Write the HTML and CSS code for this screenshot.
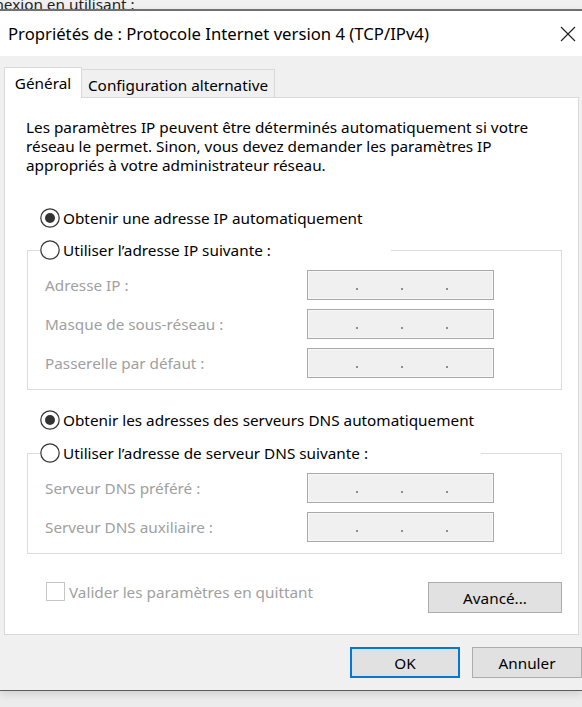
FILE: index.html
```html
<!DOCTYPE html>
<html lang="fr">
<head>
<meta charset="utf-8">
<title>Propriétés de : Protocole Internet version 4 (TCP/IPv4)</title>
<link rel="stylesheet" href="styles.css">
</head>
<body>
<div class="behind"><span>Connexion en utilisant :</span></div>
<div class="window">
  <div class="titlebar">
    <span class="title">Propriétés de : Protocole Internet version 4 (TCP/IPv4)</span>
    <svg class="close" viewBox="0 0 16 16" aria-hidden="true"><path d="M1 1 L15 15 M15 1 L1 15" stroke="#1b1b1b" stroke-width="1.1" fill="none"/></svg>
  </div>
  <div class="content">
    <div class="tabs">
      <div class="tab tab-sel">Général</div>
      <div class="tab tab-alt">Configuration alternative</div>
    </div>
    <div class="panel">
      <div class="desc">Les paramètres IP peuvent être déterminés automatiquement si votre<br>réseau le permet. Sinon, vous devez demander les paramètres IP<br>appropriés à votre administrateur réseau.</div>

      <div class="radio radio-ip-auto">
        <svg class="rb" viewBox="0 0 20 20"><circle cx="10" cy="10" r="9.2" fill="#fff" stroke="#333" stroke-width="1.2"/><circle cx="10" cy="10" r="5" fill="#333"/></svg>
        <span>Obtenir une adresse IP automatiquement</span>
      </div>

      <div class="group group-ip">
        <div class="ghead">
          <span class="seg-l"></span>
          <div class="radio cap cap-ip">
            <svg class="rb" viewBox="0 0 20 20"><circle cx="10" cy="10" r="9.2" fill="#fff" stroke="#333" stroke-width="1.2"/></svg>
            <span>Utiliser l’adresse IP suivante :</span>
          </div>
          <span class="seg-r"></span>
        </div>
        <div class="gbody">
          <div class="frow"><span class="lbl">Adresse IP :</span><div class="ip"><span class="oct"></span><span class="dot"></span><span class="oct"></span><span class="dot"></span><span class="oct"></span><span class="dot"></span><span class="oct"></span></div></div>
          <div class="frow"><span class="lbl">Masque de sous-réseau :</span><div class="ip"><span class="oct"></span><span class="dot"></span><span class="oct"></span><span class="dot"></span><span class="oct"></span><span class="dot"></span><span class="oct"></span></div></div>
          <div class="frow"><span class="lbl">Passerelle par défaut :</span><div class="ip"><span class="oct"></span><span class="dot"></span><span class="oct"></span><span class="dot"></span><span class="oct"></span><span class="dot"></span><span class="oct"></span></div></div>
        </div>
      </div>

      <div class="radio radio-dns-auto">
        <svg class="rb" viewBox="0 0 20 20"><circle cx="10" cy="10" r="9.2" fill="#fff" stroke="#333" stroke-width="1.2"/><circle cx="10" cy="10" r="5" fill="#333"/></svg>
        <span>Obtenir les adresses des serveurs DNS automatiquement</span>
      </div>

      <div class="group group-dns">
        <div class="ghead">
          <span class="seg-l"></span>
          <div class="radio cap cap-dns">
            <svg class="rb" viewBox="0 0 20 20"><circle cx="10" cy="10" r="9.2" fill="#fff" stroke="#333" stroke-width="1.2"/></svg>
            <span>Utiliser l’adresse de serveur DNS suivante :</span>
          </div>
          <span class="seg-r"></span>
        </div>
        <div class="gbody">
          <div class="frow"><span class="lbl">Serveur DNS préféré :</span><div class="ip"><span class="oct"></span><span class="dot"></span><span class="oct"></span><span class="dot"></span><span class="oct"></span><span class="dot"></span><span class="oct"></span></div></div>
          <div class="frow"><span class="lbl">Serveur DNS auxiliaire :</span><div class="ip"><span class="oct"></span><span class="dot"></span><span class="oct"></span><span class="dot"></span><span class="oct"></span><span class="dot"></span><span class="oct"></span></div></div>
        </div>
      </div>

      <div class="bottom-row">
        <div class="check"><span class="cbox"></span><span class="clabel">Valider les paramètres en quittant</span></div>
        <div class="btn btn-adv">Avancé...</div>
      </div>
    </div>
    <div class="actions">
      <div class="btn btn-ok">OK</div>
      <div class="btn btn-cancel">Annuler</div>
    </div>
  </div>
</div>
</body>
</html>
```
FILE: styles.css
```css
html {
  background: #ececec;
}
body {
  margin: 0;
  width: 582px;
  height: 707px;
  overflow: hidden;
  font-family: "Noto Sans", "Open Sans", sans-serif;
  font-size: 15.3px;
  color: #000;
}

/* window underneath */
.behind {
  height: 9px;
  background: #f0f0f0;
  overflow: hidden;
  line-height: 20px;
}
.behind span {
  display: block;
  margin-top: -6px;
  margin-left: -34px;
  white-space: nowrap;
  color: #222;
}

/* dialog window */
.window {
  border-top: 2px solid #707070;
  border-bottom: 1px solid #5c5c5c;
  background: #f0f0f0;
  box-shadow: 0 3px 8px rgba(0, 0, 0, 0.12);
}
.titlebar {
  height: 45px;
  background: #fff;
  display: flex;
  align-items: center;
  padding-left: 8px;
}
.title {
  font-size: 16.7px;
  white-space: nowrap;
}
.close {
  margin-left: auto;
  margin-right: 6px;
  width: 16px;
  height: 16px;
}

.content {
  padding: 11px 0 12px 0;
}

/* tabs */
.tabs {
  display: flex;
  align-items: flex-end;
  height: 30px;
  margin-left: 4px;
}
.tab {
  box-sizing: border-box;
  border: 1px solid #d9d9d9;
  border-bottom: none;
  display: flex;
  align-items: center;
  justify-content: center;
  white-space: nowrap;
}
.tab-sel {
  width: 78px;
  height: 31px;
  margin-bottom: -1px;
  background: #fff;
  position: relative;
  z-index: 1;
}
.tab-alt {
  width: 194px;
  height: 28px;
  margin-left: -1px;
  padding-top: 2px;
  background: #f0f0f0;
}

/* panel */
.panel {
  margin: 0 3px 0 4px;
  border: 1px solid #d9d9d9;
  background: #fff;
  padding: 20px 0 21px 0;
}
.desc {
  margin-left: 21px;
  line-height: 19px;
  white-space: nowrap;
}

.radio {
  display: flex;
  align-items: center;
  height: 20px;
  white-space: nowrap;
}
.rb {
  width: 20px;
  height: 20px;
  flex: none;
  margin-right: 3px;
}
.radio-ip-auto {
  margin: 33px 0 0 35px;
}
.radio-dns-auto {
  margin: 20px 0 0 35px;
}

/* group boxes */
.group {
  width: 535px;
  margin-left: 22px;
}
.group-ip {
  margin-top: 12px;
}
.group-dns {
  margin-top: 13px;
}
.ghead {
  display: flex;
  height: 20px;
  align-items: flex-end;
}
.seg-l {
  box-sizing: border-box;
  width: 13px;
  height: 10px;
  border-top: 1px solid #dcdcdc;
  border-left: 1px solid #dcdcdc;
}
.seg-r {
  box-sizing: border-box;
  flex: 1;
  height: 10px;
  border-top: 1px solid #dcdcdc;
  border-right: 1px solid #dcdcdc;
}
.cap {
  align-self: center;
  background: #fff;
}
.cap-ip {
  width: 351px;
}
.cap-dns {
  width: 441px;
}
.gbody {
  border: 1px solid #dcdcdc;
  border-top: none;
  padding: 10px 0 11px 17px;
  display: grid;
  grid-template-columns: 262px 187px;
  row-gap: 9px;
  align-items: center;
}
.frow {
  display: contents;
}
.lbl {
  color: #a0a0a0;
  white-space: nowrap;
}
.ip {
  box-sizing: border-box;
  height: 30px;
  border: 1px solid #a9a9a9;
  box-shadow: inset 0 0 0 1px #f7f7f7;
  background: #f0f0f0;
  display: flex;
  padding-left: 5px;
}
.oct {
  width: 43px;
  flex: none;
}
.dot {
  width: 2px;
  height: 2px;
  flex: none;
  align-self: flex-end;
  margin-bottom: 9px;
  background: #8c8c9c;
}

/* bottom of panel */
.bottom-row {
  margin: 28px 16px 0 41px;
  display: flex;
  justify-content: space-between;
  align-items: flex-start;
}
.check {
  display: flex;
  align-items: center;
  height: 19px;
  color: #a0a0a0;
  white-space: nowrap;
}
.cbox {
  box-sizing: border-box;
  width: 19px;
  height: 19px;
  border: 1px solid #c6c6c6;
  background: #fff;
  margin-right: 4px;
}

.btn {
  box-sizing: border-box;
  height: 31px;
  border: 1px solid #adadad;
  background: #e1e1e1;
  display: flex;
  align-items: center;
  justify-content: center;
  white-space: nowrap;
}
.btn-adv {
  width: 134px;
}
.actions {
  margin-top: 12px;
  display: flex;
  justify-content: flex-end;
  gap: 12px;
}
.btn-ok {
  width: 110px;
  border: 2px solid #0078d7;
}
.btn-cancel {
  width: 110px;
}
```
